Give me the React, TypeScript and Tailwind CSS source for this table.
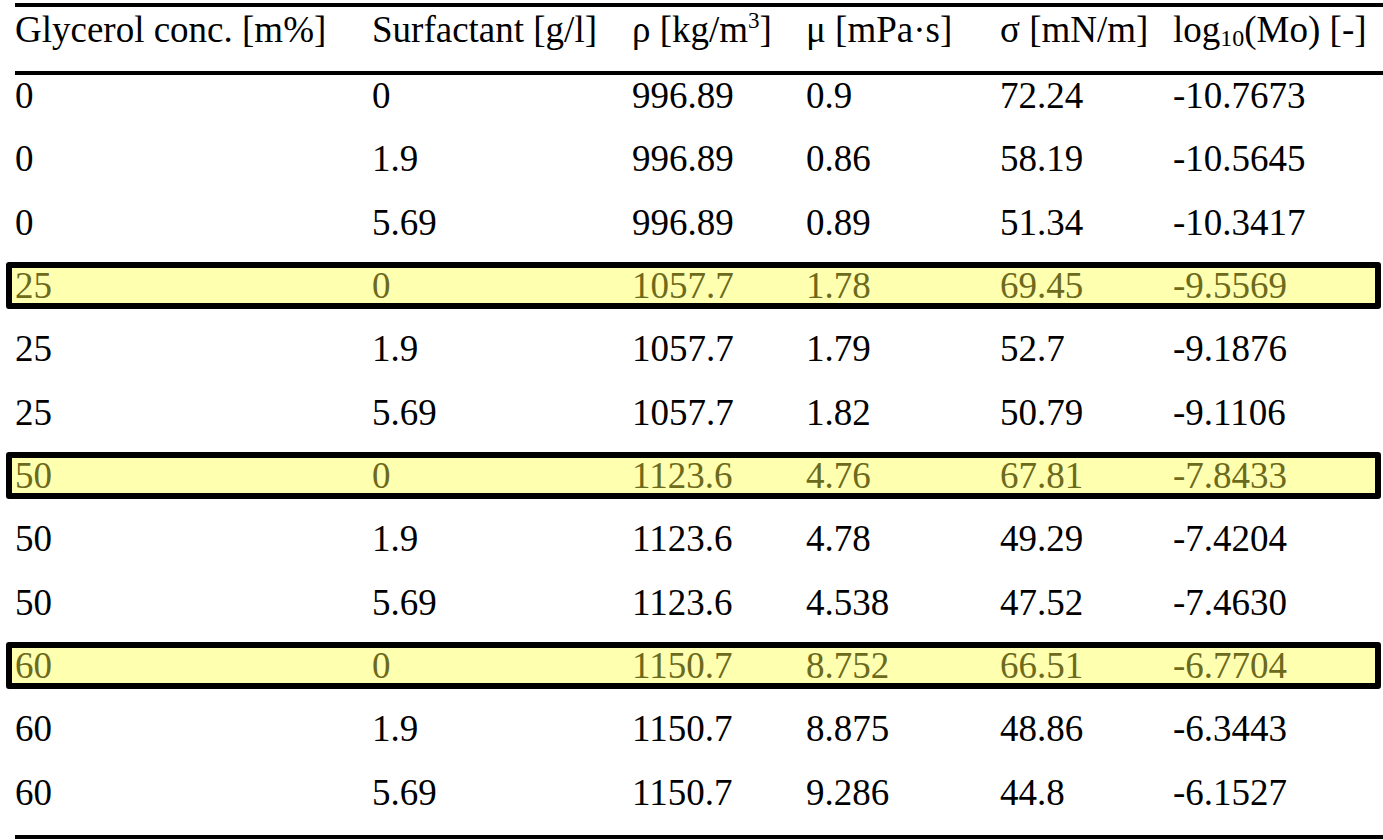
const rows: { c: string[]; hl?: boolean }[] = [
  { c: ["0", "0", "996.89", "0.9", "72.24", "-10.7673"] },
  { c: ["0", "1.9", "996.89", "0.86", "58.19", "-10.5645"] },
  { c: ["0", "5.69", "996.89", "0.89", "51.34", "-10.3417"] },
  { c: ["25", "0", "1057.7", "1.78", "69.45", "-9.5569"], hl: true },
  { c: ["25", "1.9", "1057.7", "1.79", "52.7", "-9.1876"] },
  { c: ["25", "5.69", "1057.7", "1.82", "50.79", "-9.1106"] },
  { c: ["50", "0", "1123.6", "4.76", "67.81", "-7.8433"], hl: true },
  { c: ["50", "1.9", "1123.6", "4.78", "49.29", "-7.4204"] },
  { c: ["50", "5.69", "1123.6", "4.538", "47.52", "-7.4630"] },
  { c: ["60", "0", "1150.7", "8.752", "66.51", "-6.7704"], hl: true },
  { c: ["60", "1.9", "1150.7", "8.875", "48.86", "-6.3443"] },
  { c: ["60", "5.69", "1150.7", "9.286", "44.8", "-6.1527"] },
];

const widths = ["w-[357px]", "w-[260px]", "w-[174px]", "w-[194px]", "w-[173px]", "flex-1"];

function Cells({ c }: { c: React.ReactNode[] }) {
  return (
    <>
      {c.map((v, i) => (
        <div key={i} className={`${widths[i]} shrink-0 whitespace-nowrap`}>
          {v}
        </div>
      ))}
    </>
  );
}

export default function App() {
  return (
    <div
      className="h-[840px] w-[1383px] overflow-hidden bg-white pt-[3px] pl-[15px] text-[37px] leading-[41px] text-black"
      style={{ fontFamily: '"Liberation Serif", "Times New Roman", serif' }}
    >
      <div className="border-y-4 border-black">
        <div className="flex h-[64px] items-start pt-[2px]">
          <Cells
            c={[
              "Glycerol conc. [m%]",
              "Surfactant [g/l]",
              <>
                ρ [kg/m<sup className="relative -top-[1px] align-super text-[23px] leading-none">3</sup>]
              </>,
              "μ [mPa·s]",
              "σ [mN/m]",
              <>
                log<span className="relative top-[4px] align-baseline text-[24px] leading-none">10</span>(Mo) [-]
              </>,
            ]}
          />
        </div>
      </div>
      <div className="border-b-4 border-black">
        {rows.map((r, i) =>
          r.hl ? (
            <div key={i} className="flex h-[63.33px] flex-col">
              <div className="-mt-[3px] -ml-[9px] mr-[2px] h-[47px] shrink-0 rounded-[3px] border-[6px] border-black bg-[#ffffb0] pl-[3px] text-[#6c6a1c]">
                <div className="-mt-[3px] flex">
                  <Cells c={r.c} />
                </div>
              </div>
            </div>
          ) : (
            <div key={i} className="flex h-[63.33px] items-start">
              <Cells c={r.c} />
            </div>
          ),
        )}
      </div>
    </div>
  );
}
